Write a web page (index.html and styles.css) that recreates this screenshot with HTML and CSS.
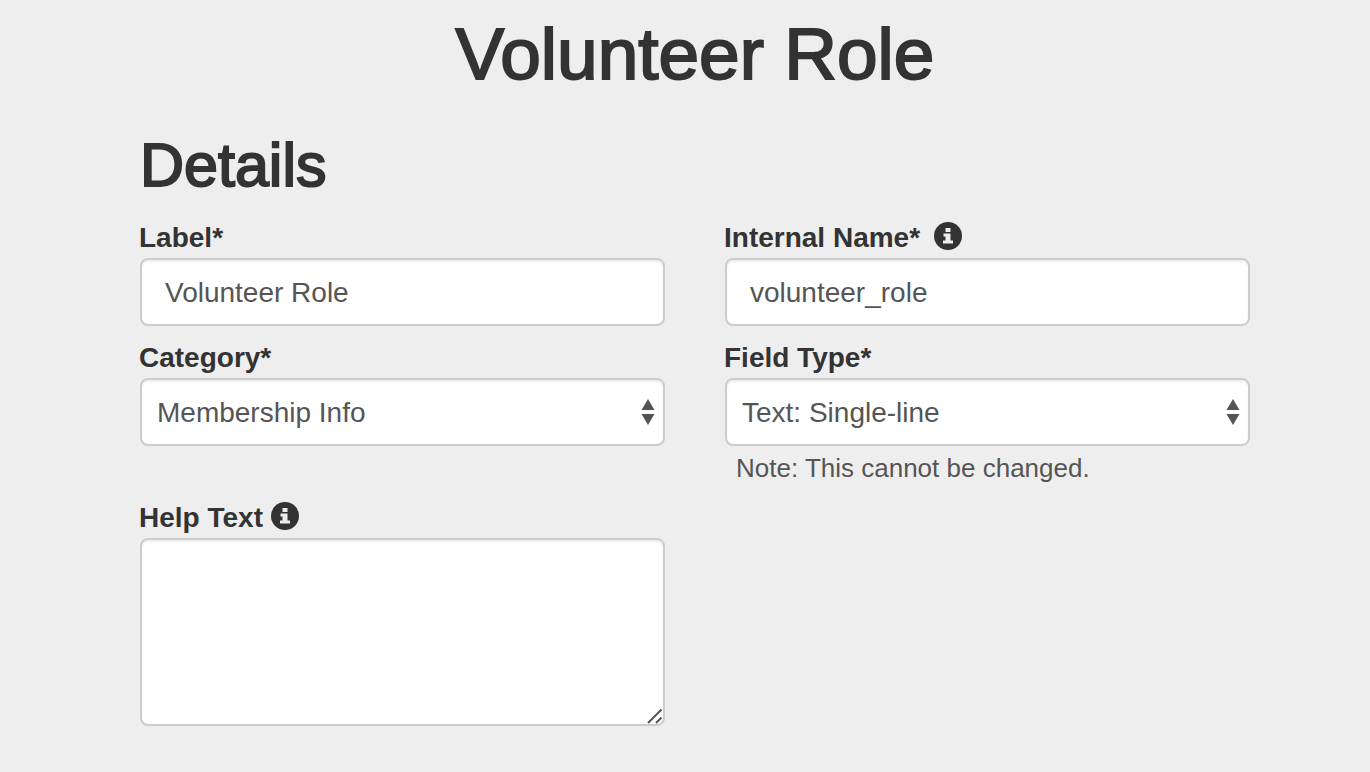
FILE: index.html
```
<!DOCTYPE html>
<html lang="en">
  <head>
    <meta charset="UTF-8" />
    <meta name="viewport" content="width=device-width, initial-scale=1.0" />
    <title>Volunteer Role</title>

    <link rel="stylesheet" href="styles.css">
  </head>
  <body>
    <main class="page">
      <h1>Volunteer Role</h1>
      <h2>Details</h2>

      <form class="fields">
        <div class="field">
          <div class="field-head">
            <label for="label">Label*</label>
          </div>
          <input class="control" type="text" id="label" value="Volunteer Role" />
        </div>

        <div class="field">
          <div class="field-head spaced">
            <label for="internal-name">Internal Name*</label>
            <svg class="info" viewBox="0 0 28 28" aria-hidden="true">
              <circle cx="14" cy="14" r="14" />
              <path d="M11.500 6h5v4h-5zM9.500 11.500h7v7h2.500V21.500h-10v-3h2.500V14.500h-2z" />
            </svg>
          </div>
          <input class="control" type="text" id="internal-name" value="volunteer_role" />
        </div>

        <div class="field">
          <div class="field-head">
            <label for="category">Category*</label>
          </div>
          <div class="select">
            <select class="control" id="category">
              <option>Membership Info</option>
            </select>
            <svg class="arrows" viewBox="0 0 14 26" aria-hidden="true">
              <path d="M7 0l6.500 11h-13zM7 26L.5 15h13z" />
            </svg>
          </div>
        </div>

        <div class="field">
          <div class="field-head">
            <label for="field-type">Field Type*</label>
          </div>
          <div class="select">
            <select class="control" id="field-type">
              <option>Text: Single-line</option>
            </select>
            <svg class="arrows" viewBox="0 0 14 26" aria-hidden="true">
              <path d="M7 0l6.500 11h-13zM7 26L.5 15h13z" />
            </svg>
          </div>
          <p class="note">Note: This cannot be changed.</p>
        </div>

        <div class="field">
          <div class="field-head">
            <label for="help-text">Help Text</label>
            <svg class="info" viewBox="0 0 28 28" aria-hidden="true">
              <circle cx="14" cy="14" r="14" />
              <path d="M11.500 6h5v4h-5zM9.500 11.500h7v7h2.500V21.500h-10v-3h2.500V14.500h-2z" />
            </svg>
          </div>
          <div class="textarea">
            <textarea class="control" id="help-text"></textarea>
            <svg class="grip" viewBox="0 0 16 16" aria-hidden="true">
              <path d="M1 15L14.500 1.500M9 15l5.500-5.500" />
            </svg>
          </div>
        </div>
      </form>
    </main>
  </body>
</html>
```

FILE: styles.css
```
*,
*::after,
*::before {
  margin: 0;
  padding: 0;
  box-sizing: border-box;
}

:root {
  --bg: #eee;
  --heading: #333;
  --text: #555;
  --border: #ccc;
}

body {
  background-color: var(--bg);
  color: var(--heading);
  font-family: "Liberation Sans", Arial, sans-serif;
  font-size: 28px;
  line-height: 40px;
}

.page {
  padding: 14px 120px 40px 140px;
}

h1,
h2 {
  font-weight: 500;
  -webkit-text-stroke: 2px var(--heading);
}

h1 {
  font-size: 73px;
  line-height: 80px;
  text-align: center;
}

h2 {
  margin: 38px 0 20px;
  font-size: 61px;
  line-height: 66px;
}

.fields {
  display: grid;
  grid-template-columns: 1fr 1fr;
  gap: 12px 60px;
}

.field-head {
  display: flex;
  align-items: center;
  gap: 8px;
  margin-left: -1px;
}

.field-head.spaced {
  gap: 14px;
}

label {
  font-weight: bold;
}

.info {
  width: 28px;
  height: 28px;
  margin-bottom: 4px;
  fill: var(--heading);
}

.info path {
  fill: var(--bg);
}

.control {
  display: block;
  width: 100%;
  height: 68px;
  padding: 1px 23px 0;
  border: 2px solid var(--border);
  border-radius: 8px;
  background-color: white;
  box-shadow: inset 0 2px 2px rgba(0, 0, 0, 0.075);
  color: var(--text);
  font: inherit;
}

.control:focus {
  outline: none;
  border-color: #66afe9;
}

.select,
.textarea {
  position: relative;
}

select.control {
  padding: 1px 15px 0;
  appearance: none;
}

.arrows {
  position: absolute;
  top: 21px;
  right: 10px;
  width: 14px;
  height: 26px;
  fill: var(--text);
  pointer-events: none;
}

textarea.control {
  height: 188px;
  padding: 12px 23px;
  resize: vertical;
}

textarea.control::-webkit-resizer {
  display: none;
}

.grip {
  position: absolute;
  right: 2px;
  bottom: 2px;
  width: 16px;
  height: 16px;
  fill: none;
  stroke: var(--text);
  stroke-width: 2;
  pointer-events: none;
}

.note {
  padding: 4px 11px 0;
  color: var(--text);
  font-size: 26px;
  line-height: 36px;
}
```
